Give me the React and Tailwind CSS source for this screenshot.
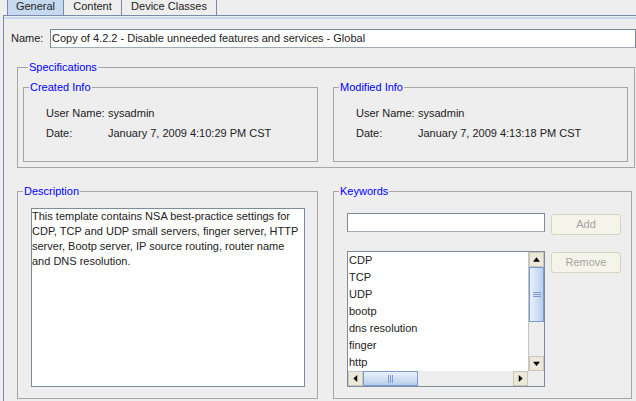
import React from 'react';

const font = { fontFamily: '"Liberation Sans", Arial, sans-serif' };

const Group = ({ title, className = '', children }) => (
    <fieldset className={`border border-[#a5a5a5] ${className}`}>
        <legend className="ml-[5px] px-[1px] text-[11px] leading-[14px] text-[#0000ff]">{title}</legend>
        {children}
    </fieldset>
);

const InfoRows = ({ user, date }) => (
    <div className="pt-[9px] pb-[18px] pl-[22px] text-[11px] text-[#222]">
        <div className="flex h-[20px] items-center">
            <span className="w-[62px]">User Name:</span>
            <span>{user}</span>
        </div>
        <div className="flex h-[20px] items-center">
            <span className="w-[62px]">Date:</span>
            <span>{date}</span>
        </div>
    </div>
);

const ArrowBtn = ({ dir }) => {
    const pts = {
        up: '3.5,10 11.5,10 7.5,5',
        down: '3.5,5.5 11.5,5.5 7.5,10.5',
        left: '9.5,3.5 9.5,11.5 5,7.5',
        right: '5.5,3.5 5.5,11.5 10,7.5',
    }[dir];
    return (
        <div className="flex h-[15px] w-[15px] items-center justify-center border border-[#c9c7ba] bg-[#ece9d8]">
            <svg width="15" height="15" viewBox="0 0 15 15">
                <polygon points={pts} fill="#000" />
            </svg>
        </div>
    );
};

const keywords = ['CDP', 'TCP', 'UDP', 'bootp', 'dns resolution', 'finger', 'http'];

export default function App() {
    return (
        <div className="flex h-[401px] w-[636px] flex-col overflow-hidden bg-[#eeeeee] text-[#222]" style={font}>
            {/* tabs */}
            <div className="flex h-[15px] pl-[7px] text-[11px] leading-[13px]">
                <div className="flex w-[57px] items-start justify-center border-x border-[#7a8aa8] bg-[#c5d9f0]">General</div>
                <div className="flex w-[58px] items-start justify-center border-r border-[#7a8aa8]">Content</div>
                <div className="flex w-[95px] items-start justify-center border-r border-[#7a8aa8]">Device Classes</div>
            </div>

            <div className="ml-[3px] flex flex-1 flex-col border-l border-t border-[#7a8aa8]">
                <div className="mt-[1px] h-[2px] bg-[#c8daf0]" />

                {/* name */}
                <div className="mt-[10px] flex items-center pl-[7px] text-[11px]">
                    <span className="w-[39px]">Name:</span>
                    <div className="flex h-[19px] flex-1 items-center border border-[#7a8a99] border-b-[#a0aab4] bg-white pl-[1px] text-[11px]">
                        Copy of 4.2.2 - Disable unneeded features and services - Global
                    </div>
                </div>

                {/* specifications */}
                <Group title="Specifications" className="mt-[12px] ml-[13px] mr-[1px] px-[5px] pb-[5px]">
                    <div className="mt-[6px] flex gap-[15px]">
                        <Group title="Created Info" className="w-[295px]">
                            <InfoRows user="sysadmin" date="January 7, 2009 4:10:29 PM CST" />
                        </Group>
                        <Group title="Modified Info" className="w-[295px]">
                            <InfoRows user="sysadmin" date="January 7, 2009 4:13:18 PM CST" />
                        </Group>
                    </div>
                </Group>

                {/* description + keywords */}
                <div className="mt-[16px] ml-[13px] flex gap-[15px]">
                    <Group title="Description" className="h-[215px] w-[301px]">
                        <div className="mt-[10px] ml-[13px] h-[179px] w-[274px] border border-[#7f8c9c] bg-white text-[11px] leading-[15px]">
                            This template contains NSA best-practice settings for CDP, TCP and UDP small servers, finger server, HTTP server, Bootp server, IP source routing, router name and DNS resolution.
                        </div>
                    </Group>

                    <Group title="Keywords" className="h-[215px] w-[299px]">
                        <div className="mt-[15px] ml-[13px] grid grid-cols-[198px_70px] items-start gap-x-[6px]">
                            <div className="h-[19px] border border-[#7a8a99] border-b-[#a0aab4] bg-white" />
                            <button className="mt-[1px] h-[21px] rounded-[3px] border border-[#d6d3c5] bg-[#f5f4ea] text-[11px] text-[#a3a3a3]">Add</button>

                            <div className="mt-[16px] grid h-[136px] grid-cols-[1fr_16px] grid-rows-[1fr_15px] border border-[#7f8c9c] bg-white">
                                <div className="overflow-hidden pl-[1px] text-[11px] leading-[17px]">
                                    {keywords.map((k) => (
                                        <div key={k}>{k}</div>
                                    ))}
                                </div>
                                <div className="flex flex-col border-l border-[#c4c4c4] bg-[#eeeeee]">
                                    <ArrowBtn dir="up" />
                                    <div className="flex h-[55px] w-[15px] items-center justify-center border border-[#7d9ad4] bg-gradient-to-r from-[#e8f0fa] via-[#d2e1f4] to-[#b9cde8]">
                                        <div className="flex w-[8px] flex-col gap-[1px]">
                                            <div className="h-[1px] bg-[#7d9ad4]" />
                                            <div className="h-[1px] bg-[#7d9ad4]" />
                                            <div className="h-[1px] bg-[#7d9ad4]" />
                                        </div>
                                    </div>
                                    <div className="flex-1" />
                                    <ArrowBtn dir="down" />
                                </div>
                                <div className="flex bg-[#eeeeee]">
                                    <ArrowBtn dir="left" />
                                    <div className="flex h-[15px] w-[55px] items-center justify-center border border-[#7d9ad4] bg-gradient-to-b from-[#e8f0fa] via-[#d2e1f4] to-[#b9cde8]">
                                        <div className="flex h-[8px] gap-[1px]">
                                            <div className="w-[1px] bg-[#7d9ad4]" />
                                            <div className="w-[1px] bg-[#7d9ad4]" />
                                            <div className="w-[1px] bg-[#7d9ad4]" />
                                        </div>
                                    </div>
                                    <div className="flex-1" />
                                    <ArrowBtn dir="right" />
                                </div>
                                <div className="bg-[#eeeeee]" />
                            </div>
                            <button className="mt-[17px] h-[21px] rounded-[3px] border border-[#d6d3c5] bg-[#f5f4ea] text-[11px] text-[#a3a3a3]">Remove</button>
                        </div>
                    </Group>
                </div>
            </div>
        </div>
    );
}
